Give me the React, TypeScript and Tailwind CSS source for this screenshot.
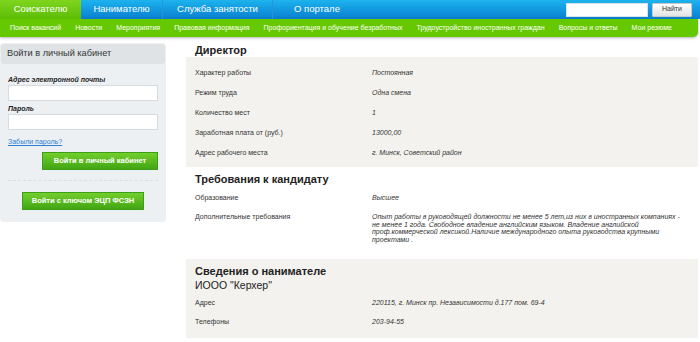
import React from "react";

const font = { fontFamily: '"Liberation Sans", Arial, sans-serif' };

function Row({ label, value, h = "h-[20px]" }: { label: string; value: string; h?: string }) {
  return (
    <div className={`flex items-center ${h} pl-[9px] text-[7px] text-[#333]`}>
      <div className="w-[177px] shrink-0">{label}</div>
      <div className="italic">{value}</div>
    </div>
  );
}

export default function App() {
  const subnav = [
    "Поиск вакансий",
    "Новости",
    "Мероприятия",
    "Правовая информация",
    "Профориентация и обучение безработных",
    "Трудоустройство иностранных граждан",
    "Вопросы и ответы",
    "Мои резюме",
  ];
  return (
    <div className="w-[700px] h-[342px] overflow-hidden bg-white relative" style={font}>
      {/* top bar */}
      <div className="h-[19px] flex items-stretch bg-gradient-to-b from-[#1db3ee] to-[#0a7fd0]">
        <div className="w-[81px] flex items-center justify-center text-white text-[9.5px] bg-gradient-to-b from-[#7fd51e] to-[#5cbd04]">
          Соискателю
        </div>
        <div className="w-[82px] flex items-center justify-center text-white text-[9.5px] border-r border-[#2a93d6]">
          Нанимателю
        </div>
        <div className="w-[110px] flex items-center justify-center text-white text-[9.5px] border-r border-[#2a93d6]">
          Служба занятости
        </div>
        <div className="w-[88px] flex items-center justify-center text-white text-[9.5px]">
          О портале
        </div>
        <div className="flex-1" />
        <div className="flex items-center gap-[4px] pr-[8px]">
          <div className="w-[82px] h-[14px] bg-white border border-[#d8e4ec]" />
          <div className="w-[40px] h-[14px] flex items-center justify-center text-[7px] text-[#333] bg-gradient-to-b from-[#ffffff] to-[#e3e3e3] border border-[#c9c9c9] rounded-[1px]">
            Найти
          </div>
        </div>
      </div>
      {/* sub nav */}
      <div className="h-[18px] w-[698px] flex items-center gap-[14px] pl-[10px] bg-[#66c800] rounded-br-[5px] shadow-[0_1px_3px_rgba(0,0,0,0.3)] text-white text-[7px]">
        {subnav.map((s) => (
          <span key={s} className="whitespace-nowrap">{s}</span>
        ))}
      </div>

      <div className="flex mt-[6px]">
        {/* left panel */}
        <div className="w-[166px] h-[179px] bg-[#edf0f3] rounded-[4px] shrink-0 pt-[1px]">
          <div className="mx-[1px] h-[20px] bg-[#dfe3e6] rounded-[3px] flex items-center pl-[6px] text-[9.2px] text-[#333]">
            Войти в личный кабинет
          </div>
          <div className="px-[8px]">
            <div className="mt-[12px] text-[7px] font-bold italic text-[#222] leading-[8px]">Адрес электронной почты</div>
            <div className="mt-[1px] w-[150px] h-[16px] bg-white border border-[#d6dbe0]" />
            <div className="mt-[4px] text-[7px] font-bold italic text-[#222] leading-[8px]">Пароль</div>
            <div className="mt-[1px] w-[150px] h-[16px] bg-white border border-[#d6dbe0]" />
            <div className="mt-[8px] text-[7px] text-[#2a7fd4] underline leading-[8px]">Забыли пароль?</div>
            <div className="flex justify-end mt-[6px]">
              <div className="w-[116px] h-[18px] flex items-center justify-center text-white font-bold text-[7.5px] bg-gradient-to-b from-[#72cf2c] to-[#41a612] border border-[#3f9d1c]">
                Войти в личный кабинет
              </div>
            </div>
            <div className="mt-[10px] border-t border-dashed border-[#d9dde1]" />
            <div className="flex justify-center mt-[11px]">
              <div className="w-[122px] h-[18px] flex items-center justify-center text-white font-bold text-[7.5px] bg-gradient-to-b from-[#72cf2c] to-[#41a612] border border-[#3f9d1c]">
                Войти с ключом ЭЦП ФСЗН
              </div>
            </div>
          </div>
        </div>

        {/* main */}
        <div className="ml-[20px] w-[512px]">
          <div className="h-[14px] flex items-center pl-[9px] text-[11px] font-bold text-[#222]">Директор</div>
          <div className="bg-[#f3f2ee] pt-[6px] pb-[4px]">
            <Row label="Характер работы" value="Постоянная" />
            <Row label="Режим труда" value="Одна смена" />
            <Row label="Количество мест" value="1" />
            <Row label="Заработная плата от (руб.)" value="13000,00" />
            <Row label="Адрес рабочего места" value="г. Минск, Советский район" />
          </div>

          <div className="mt-[5px] h-[14px] flex items-center pl-[9px] text-[11px] font-bold text-[#222]">
            Требования к кандидату
          </div>
          <div className="mt-[2px]">
            <Row label="Образование" value="Высшее" />
            <div className="flex pl-[9px] pt-[5px] text-[7px] leading-[7.5px] text-[#333]">
              <div className="w-[177px] shrink-0">Дополнительные требования</div>
              <div className="italic whitespace-nowrap">
                Опыт работы в руководящей должности не менее 5 лет,из них в иностранных компаниях -
                <br />
                не менее 1 года. Свободное владение английским языком. Владение английской
                <br />
                проф.коммерческой лексикой.Наличие международного опыта руководства крупными
                <br />
                проектами .
              </div>
            </div>
          </div>

          <div className="mt-[16px] bg-[#f3f2ee] pt-[5px] pb-[6px]">
            <div className="h-[14px] flex items-center pl-[9px] text-[11px] font-bold text-[#222]">
              Сведения о нанимателе
            </div>
            <div className="mt-[1px] h-[14px] flex items-center pl-[9px] text-[10.5px] text-[#222]">
              ИООО "Керхер"
            </div>
            <Row label="Адрес" value="220115, г. Минск пр. Независимости д.177 пом. 69-4" h="h-[19px] mt-[1px]" />
            <Row label="Телефоны" value="203-94-55" h="h-[19px]" />
          </div>
        </div>
      </div>
    </div>
  );
}
